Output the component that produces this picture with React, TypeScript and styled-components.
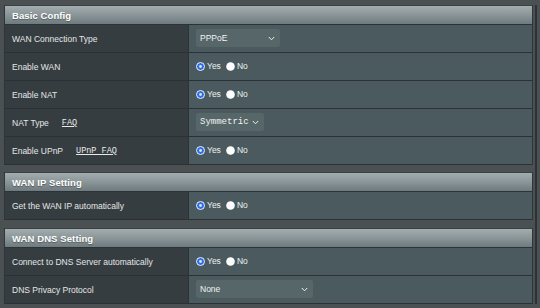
import React from "react";
import styled, { createGlobalStyle } from "styled-components";

const GlobalStyle = createGlobalStyle`
  html, body {
    margin: 0;
    padding: 0;
    background: #4b5053;
  }
  body {
    font-family: "Liberation Sans", Arial, sans-serif;
  }
`;

const Page = styled.div`
  width: 540px;
  height: 308px;
  overflow: hidden;
  box-sizing: border-box;
  padding: 5px 0 0 4px;
  background: #4b5053;
`;

const Frame = styled.div`
  width: 531px;
  border-right: 2px solid #2c3235;
  display: flex;
  flex-direction: column;
`;

const Table = styled.div<{ $gap: number }>`
  width: 529px;
  display: flex;
  flex-direction: column;
  border-left: 1px solid #2f3538;
  border-right: 1px solid #2f3538;
  box-sizing: border-box;
  margin-top: ${(p) => p.$gap}px;
`;

const Header = styled.div`
  height: 18px;
  border-top: 1px solid #3a4245;
  border-bottom: 1px solid #2c3336;
  background: linear-gradient(#a3acaf 0%, #8d989b 45%, #6e7a7e 100%);
  color: #ffffff;
  font-weight: bold;
  font-size: 9.5px;
  letter-spacing: 0.1px;
  display: flex;
  align-items: center;
  padding-left: 7px;
  text-shadow: 0 1px 1px rgba(0, 0, 0, 0.35);
`;

const Row = styled.div`
  display: grid;
  grid-template-columns: 184px 1fr;
  height: 27px;
  border-bottom: 1px solid #2b3134;
`;

const Label = styled.div`
  background: #363d40;
  border-right: 1px solid #2c3235;
  color: #e4e6e7;
  font-size: 8.5px;
  display: flex;
  align-items: center;
  padding-left: 7px;
`;

const Value = styled.div`
  background: #4a5a5e;
  display: flex;
  align-items: center;
  padding-left: 7px;
`;

const Link = styled.span`
  font-family: "Liberation Mono", "DejaVu Sans Mono", monospace;
  font-size: 8.5px;
  text-decoration: underline;
  margin-left: 13px;
  color: #e8eaea;
`;

const Select = styled.div<{ $w: number; $mono?: boolean }>`
  width: ${(p) => p.$w}px;
  height: 18px;
  box-sizing: border-box;
  background: #566669;
  border-radius: 2px;
  color: #f1f3f3;
  font-family: ${(p) =>
    p.$mono
      ? `"Liberation Mono", "DejaVu Sans Mono", monospace`
      : `"Liberation Sans", Arial, sans-serif`};
  font-size: ${(p) => (p.$mono ? "9px" : "8.5px")};
  display: flex;
  align-items: center;
  justify-content: space-between;
  padding: 0 5px 0 4px;
  margin-top: -1px;
`;

const Radios = styled.div`
  display: flex;
  align-items: center;
  color: #eef0f0;
  font-size: 8.5px;
  margin-top: -1px;
`;

const Opt = styled.label`
  display: flex;
  align-items: center;
  gap: 2px;
  margin-right: 5px;
`;

const Chevron = () => (
  <svg width="7" height="5" viewBox="0 0 7 5">
    <path d="M0.8 1 L3.5 3.8 L6.2 1" fill="none" stroke="#eef0f0" strokeWidth="1" />
  </svg>
);

const Dot = ({ on }: { on: boolean }) =>
  on ? (
    <svg width="9" height="9" viewBox="0 0 9 9">
      <circle cx="4.5" cy="4.5" r="4" fill="#2d6ee6" stroke="#e9eef7" strokeWidth="1" />
      <circle cx="4.5" cy="4.5" r="1.4" fill="#dbe6fb" />
    </svg>
  ) : (
    <svg width="9" height="9" viewBox="0 0 9 9">
      <circle cx="4.5" cy="4.5" r="4.3" fill="#ffffff" />
    </svg>
  );

const YesNo = () => (
  <Radios>
    <Opt>
      <Dot on />
      Yes
    </Opt>
    <Opt>
      <Dot on={false} />
      No
    </Opt>
  </Radios>
);

type Item = {
  label: string;
  link?: string;
  kind: "radio" | "select";
  value?: string;
  w?: number;
  mono?: boolean;
};

const sections: { title: string; gap: number; items: Item[] }[] = [
  {
    title: "Basic Config",
    gap: 0,
    items: [
      { label: "WAN Connection Type", kind: "select", value: "PPPoE", w: 84 },
      { label: "Enable WAN", kind: "radio" },
      { label: "Enable NAT", kind: "radio" },
      { label: "NAT Type", link: "FAQ", kind: "select", value: "Symmetric", w: 68, mono: true },
      { label: "Enable UPnP", link: "UPnP FAQ", kind: "radio" },
    ],
  },
  {
    title: "WAN IP Setting",
    gap: 7,
    items: [{ label: "Get the WAN IP automatically", kind: "radio" }],
  },
  {
    title: "WAN DNS Setting",
    gap: 8,
    items: [
      { label: "Connect to DNS Server automatically", kind: "radio" },
      { label: "DNS Privacy Protocol", kind: "select", value: "None", w: 117 },
    ],
  },
];

export default function App() {
  return (
    <Page>
      <GlobalStyle />
      <Frame>
        {sections.map((s) => (
          <Table key={s.title} $gap={s.gap}>
            <Header>{s.title}</Header>
            {s.items.map((it) => (
              <Row key={it.label}>
                <Label>
                  {it.label}
                  {it.link && <Link>{it.link}</Link>}
                </Label>
                <Value>
                  {it.kind === "radio" ? (
                    <YesNo />
                  ) : (
                    <Select $w={it.w || 84} $mono={it.mono}>
                      <span>{it.value}</span>
                      <Chevron />
                    </Select>
                  )}
                </Value>
              </Row>
            ))}
          </Table>
        ))}
      </Frame>
    </Page>
  );
}
